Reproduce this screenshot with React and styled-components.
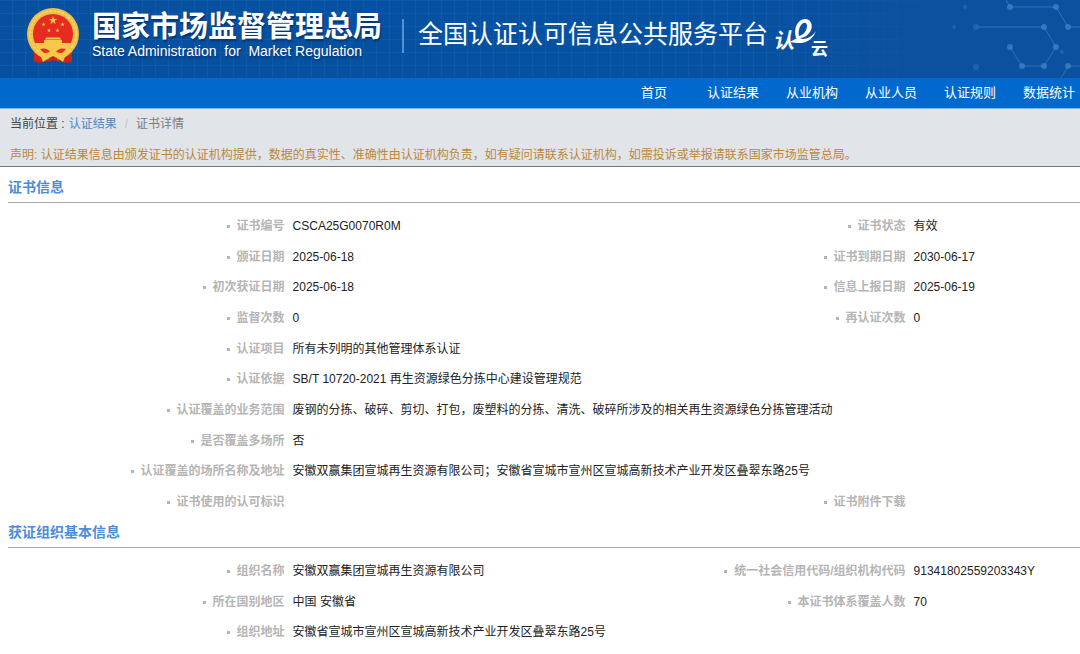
import styled, { createGlobalStyle } from "styled-components";

const menus = ["首页", "认证结果", "从业机构", "从业人员", "认证规则", "数据统计"];

const certificate = [
  [["证书编号", "CSCA25G0070R0M"], ["证书状态", "有效"]],
  [["颁证日期", "2025-06-18"], ["证书到期日期", "2030-06-17"]],
  [["初次获证日期", "2025-06-18"], ["信息上报日期", "2025-06-19"]],
  [["监督次数", "0"], ["再认证次数", "0"]],
  [["认证项目", "所有未列明的其他管理体系认证"]],
  [["认证依据", "SB/T 10720-2021 再生资源绿色分拣中心建设管理规范"]],
  [["认证覆盖的业务范围", "废钢的分拣、破碎、剪切、打包，废塑料的分拣、清洗、破碎所涉及的相关再生资源绿色分拣管理活动"]],
  [["是否覆盖多场所", "否"]],
  [["认证覆盖的场所名称及地址", "安徽双赢集团宣城再生资源有限公司；安徽省宣城市宣州区宣城高新技术产业开发区叠翠东路25号"]],
  [["证书使用的认可标识", ""], ["证书附件下载", ""]],
];

const organization = [
  [["组织名称", "安徽双赢集团宣城再生资源有限公司"], ["统一社会信用代码/组织机构代码", "91341802559203343Y"]],
  [["所在国别地区", "中国 安徽省"], ["本证书体系覆盖人数", "70"]],
  [["组织地址", "安徽省宣城市宣州区宣城高新技术产业开发区叠翠东路25号"]],
];

const STAR = "0,-1 0.23,-0.31 0.95,-0.31 0.36,0.12 0.59,0.81 0,0.38 -0.59,0.81 -0.36,0.12 -0.95,-0.31 -0.23,-0.31";

function Emblem() {
  return (
    <svg width="54" height="56" viewBox="0 0 54 56" aria-hidden="true">
      <path d="M8 38 L8 53 Q12 56 17 54 L27 52 L37 54 Q42 56 46 53 L46 38 Z" fill="#d3241a" />
      <circle cx="27" cy="26" r="26" fill="#f0bd45" />
      <circle cx="27" cy="26" r="23" fill="none" stroke="#f8d06a" strokeWidth="2" strokeDasharray="3 1" />
      <circle cx="27" cy="26" r="20" fill="#e62c20" />
      <g fill="#f8c84a">
        <polygon points={STAR} transform="translate(27 12.5) scale(4.5)" />
        <polygon points={STAR} transform="translate(17.5 16.5) scale(2.2)" />
        <polygon points={STAR} transform="translate(36.5 16.5) scale(2.2)" />
        <polygon points={STAR} transform="translate(23 22.5) scale(2.2)" />
        <polygon points={STAR} transform="translate(31.5 22.5) scale(2.2)" />
        <path d="M20 29.5 h14 l1 2 h-16z M18 32 h18 v3 h9 l-2 4 H11 l-2 -4 h9z" />
        <path d="M10 38 H44 L41 43 Q35 42 32 45 L27 42 L22 45 Q19 42 13 43 Z" />
        <circle cx="27" cy="45" r="5" />
        <path d="M9 43 L24 46 L24 49 L17 54 L15 49 Z M45 43 L30 46 L30 49 L37 54 L39 49 Z" />
      </g>
      <path d="M14 41 Q21 39 24 44 L18 45 Z M40 41 Q33 39 30 44 L36 45 Z" fill="#e62c20" />
      <path d="M23 50 L27 48 L31 50 L33 54 L27 52 L21 54 Z" fill="#d3241a" />
    </svg>
  );
}

function CloudLogo() {
  return (
    <LogoSvg width="56" height="44" viewBox="0 0 56 44" role="img" aria-label="认e云">
      <text x="5" y="32" fontSize="21" transform="skewX(-10)">认</text>
      <path
        fillRule="evenodd"
        d="M22 22 C19 12 24 3 31 3 C37 3 39 9 37 14 C35 19 30 22 26 22 C31 25 39 20 42 15 C38 26 28 29 16 26 L23 22 Z M25 20 C30 19 33 14 33 10 C33 6 30 6 28 8 C25 11 24 16 25 20 Z"
      />
      <text x="37" y="39" fontSize="17">云</text>
    </LogoSvg>
  );
}

function Molecules() {
  return (
    <Pattern width="240" height="78" viewBox="0 0 240 78" aria-hidden="true">
      <g stroke="#3f8bc9" fill="none" opacity="0.6">
        <path d="M170 7 H216 L228 27 H240 M166 0 L170 7" />
        <path d="M136 27 H204 L216 47 L204 66 H182 L170 47" />
        <path d="M221 78 L228 66 H240" />
      </g>
      <g fill="#3d8aca" opacity="0.7">
        {[[170, 7], [216, 7], [228, 27], [204, 27], [216, 47], [204, 66], [182, 66], [170, 47], [228, 66]].map(([x, y]) => (
          <circle key={`${x}-${y}`} cx={x} cy={y} r="3" />
        ))}
      </g>
      <g fill="#2c78c4" opacity="0.5">
        <circle cx="136" cy="27" r="3" />
        <circle cx="136" cy="67" r="3" />
        <circle cx="125" cy="7" r="2" />
        <circle cx="114" cy="27" r="2" />
        <circle cx="222" cy="52" r="2" />
      </g>
    </Pattern>
  );
}

function Info({ title, rows }) {
  return (
    <section>
      <SectionTitle>{title}</SectionTitle>
      <Table>
        <colgroup>
          <Column $width="27%" />
          <Column $width="30.5%" />
          <Column $width="27%" />
          <Column />
        </colgroup>
        <tbody>
          {rows.map((fields) => (
            <Row key={fields[0][0]}>
              {fields.map(([label, value]) => [
                <Label key={label} scope="row">{label}</Label>,
                <Value key={`${label}-value`} colSpan={fields.length === 1 ? 3 : 1}>{value}</Value>,
              ])}
            </Row>
          ))}
        </tbody>
      </Table>
    </section>
  );
}

export default function App() {
  return (
    <>
      <GlobalStyle />
      <Header>
        <Molecules />
        <Emblem />
        <Agency>
          <AgencyName>国家市场监督管理总局</AgencyName>
          <AgencyEnglish>State Administration&nbsp; for&nbsp; Market Regulation</AgencyEnglish>
        </Agency>
        <Divider />
        <Platform>全国认证认可信息公共服务平台</Platform>
        <CloudLogo />
      </Header>
      <Nav>
        {menus.map((menu) => (
          <NavLink key={menu} href="#">{menu}</NavLink>
        ))}
      </Nav>
      <Notice>
        <Breadcrumb>
          <span>当前位置 :</span>
          <a href="#">认证结果</a>
          <Slash>/</Slash>
          <Current>证书详情</Current>
        </Breadcrumb>
        <Statement>
          声明: 认证结果信息由颁发证书的认证机构提供，数据的真实性、准确性由认证机构负责，如有疑问请联系认证机构，如需投诉或举报请联系国家市场监管总局。
        </Statement>
      </Notice>
      <Main>
        <Info title="证书信息" rows={certificate} />
        <Info title="获证组织基本信息" rows={organization} />
      </Main>
    </>
  );
}

const GlobalStyle = createGlobalStyle`
  * {
    box-sizing: border-box;
  }
  body {
    margin: 0;
    background: #fff;
    color: #222;
    font-family: "Liberation Sans", "Noto Sans CJK SC", sans-serif;
    font-size: 12px;
    line-height: 18px;
  }
  a {
    text-decoration: none;
  }
`;

const Header = styled.header`
  position: relative;
  display: flex;
  align-items: center;
  height: 78px;
  padding: 0 26px 6px;
  overflow: hidden;
  color: #fff;
  white-space: nowrap;
  background:
    linear-gradient(90deg, transparent 70%, #0b51a0 88%),
    repeating-linear-gradient(90deg, transparent 0 12px, rgba(70, 150, 220, 0.12) 12px 13px),
    repeating-linear-gradient(0deg, transparent 0 12px, rgba(70, 150, 220, 0.12) 12px 13px),
    linear-gradient(90deg, #07509f, #0551a2 60%, #0d509d);
  & > svg {
    flex-shrink: 0;
  }
`;

const Pattern = styled.svg`
  position: absolute;
  top: 0;
  right: 0;
`;

const LogoSvg = styled.svg`
  margin-top: 4px;
  margin-left: 6px;
  fill: #fff;
  font-weight: 700;
`;

const Agency = styled.div`
  margin-left: 12px;
  text-shadow: 1px 2px 2px rgba(0, 20, 70, 0.5);
`;

const AgencyName = styled.div`
  font-size: 29px;
  font-weight: 700;
  line-height: 30px;
`;

const AgencyEnglish = styled.div`
  font-size: 14px;
  line-height: 18px;
`;

const Divider = styled.div`
  width: 2px;
  height: 34px;
  margin: 0 14px 0 20px;
  background: #5193d2;
`;

const Platform = styled.h1`
  margin: 0;
  padding-bottom: 4px;
  font-size: 25px;
  font-weight: 400;
  line-height: 36px;
`;

const Nav = styled.nav`
  display: flex;
  justify-content: flex-end;
  gap: 27px;
  padding-right: 5px;
  background: #0169cd;
  border-bottom: 1px solid #7db8ef;
`;

const NavLink = styled.a`
  min-width: 52px;
  color: #fff;
  font-size: 13px;
  line-height: 30px;
  text-align: center;
`;

const Notice = styled.div`
  padding: 5px 10px 1px;
  background: #e1e4e9;
  border-bottom: 1px solid #777;
`;

const Breadcrumb = styled.nav`
  display: flex;
  gap: 4px;
  color: #444;
  line-height: 20px;
  & > a {
    color: #4d8ac5;
  }
`;

const Slash = styled.span`
  padding: 0 4px;
  color: #c2c5ca;
`;

const Current = styled.span`
  color: #7c7c7c;
`;

const Statement = styled.p`
  margin: 11px 0 0;
  color: #bd873c;
  line-height: 20px;
`;

const Main = styled.main`
  padding-top: 5px;
`;

const SectionTitle = styled.h2`
  margin: 0 0 7px 8px;
  border-bottom: 1px solid #a9a9a9;
  color: #4c8cdc;
  font-size: 14px;
  font-weight: 700;
  line-height: 30px;
`;

const Table = styled.table`
  width: 100%;
  table-layout: fixed;
  border-collapse: collapse;
`;

const Column = styled.col`
  width: ${({ $width }) => $width ?? "auto"};
`;

const Row = styled.tr`
  height: 31px;
  &:nth-child(3n) {
    height: 30px;
  }
`;

const Label = styled.th`
  padding: 0 7px 0 0;
  color: #b5b5b5;
  text-align: right;
  white-space: nowrap;
  &::before {
    content: "";
    display: inline-block;
    width: 3px;
    height: 3px;
    margin-right: 7px;
    background: #b5b5b5;
    vertical-align: middle;
  }
`;

const Value = styled.td`
  padding: 0 0 0 1px;
`;
